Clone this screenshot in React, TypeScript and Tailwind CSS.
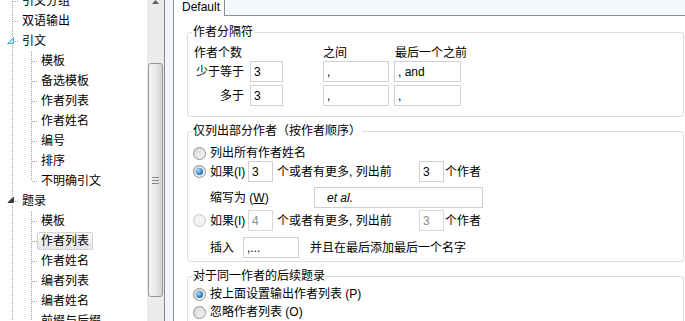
import clsx from "clsx";

type TreeRow = {
  label: string;
  level: 0 | 1;
  open?: "hot" | "dark";
  last?: boolean;
  selected?: boolean;
};

const treeRows: TreeRow[] = [
  { label: "引文分组", level: 0 },
  { label: "双语输出", level: 0 },
  { label: "引文", level: 0, open: "hot" },
  { label: "模板", level: 1 },
  { label: "备选模板", level: 1 },
  { label: "作者列表", level: 1 },
  { label: "作者姓名", level: 1 },
  { label: "编号", level: 1 },
  { label: "排序", level: 1 },
  { label: "不明确引文", level: 1, last: true },
  { label: "题录", level: 0, open: "dark" },
  { label: "模板", level: 1 },
  { label: "作者列表", level: 1, selected: true },
  { label: "作者姓名", level: 1 },
  { label: "编者列表", level: 1 },
  { label: "编者姓名", level: 1 },
  { label: "前缀与后缀", level: 1 },
];

const DOT = "#a5a5a5";

const Connector = ({ row }: { row: TreeRow }) => {
  const line = { stroke: DOT, strokeWidth: 1, strokeDasharray: "1 1" };
  if (row.level === 0) {
    return (
      <svg width="18" height="20" className="shrink-0">
        {row.open ? (
          <>
            <line x1="12.5" y1="0" x2="12.5" y2="5" {...line} />
            <line x1="12.5" y1="14" x2="12.5" y2="20" {...line} />
            <line x1="15" y1="10.5" x2="18" y2="10.5" {...line} />
            {row.open === "hot" ? (
              <polygon points="13.5,6.5 13.5,12.5 7.5,12.5" fill="#bfe8f8" stroke="#3fa9dc" />
            ) : (
              <polygon points="13.5,6 13.5,11.5 8,11.5" fill="#3c3c3c" stroke="#3c3c3c" />
            )}
          </>
        ) : (
          <>
            <line x1="12.5" y1="0" x2="12.5" y2="20" {...line} />
            <line x1="13" y1="10.5" x2="18" y2="10.5" {...line} />
          </>
        )}
      </svg>
    );
  }
  return (
    <svg width="37" height="20" className="shrink-0">
      <line x1="12.5" y1="0" x2="12.5" y2="20" {...line} />
      <line x1="31.5" y1="0" x2="31.5" y2={row.last ? 10 : 20} {...line} />
      <line x1="32" y1="10.5" x2="37" y2="10.5" {...line} />
    </svg>
  );
};

const Radio = ({ checked, disabled }: { checked?: boolean; disabled?: boolean }) => (
  <span
    className={clsx(
      "flex h-[13px] w-[13px] shrink-0 items-center justify-center rounded-full border",
      disabled
        ? "border-[#c4c4c4] bg-[#f2f2f2]"
        : "border-[#8e8f8f] bg-[linear-gradient(135deg,#d4d4d4,#f9f9f9)]"
    )}
  >
    {checked && (
      <span className="h-[7px] w-[7px] rounded-full bg-[radial-gradient(circle_at_35%_35%,#a6e0ff,#2f86cf_55%,#0c3b78)]" />
    )}
  </span>
);

const Field = ({
  value,
  className,
  disabled,
  italic,
}: {
  value: string;
  className: string;
  disabled?: boolean;
  italic?: boolean;
}) => (
  <input
    readOnly
    value={value}
    className={clsx(
      "h-[21px] shrink-0 border bg-white px-[3px] text-[12px] outline-none",
      disabled ? "border-[#d9d9d9] text-[#8d8d8d]" : "border-[#cdd0d5] text-black",
      italic && "pl-[12px] text-[11px] italic",
      className
    )}
  />
);

const Group = ({
  title,
  children,
  className,
  pad,
}: {
  title: string;
  children: React.ReactNode;
  className?: string;
  pad?: string;
}) => (
  <fieldset className={clsx("rounded-[3px] border border-[#d5dfe5]", className)}>
    <legend className="ml-[4px] px-[1px] leading-[16px]">{title}</legend>
    <div className={pad}>{children}</div>
  </fieldset>
);

export default function App() {
  return (
    <div className="flex h-[321px] w-[685px] overflow-hidden bg-white text-[12px] text-black font-['Liberation_Sans','Noto_Sans_CJK_SC',sans-serif]">
      {/* tree pane */}
      <div className="flex w-[165px] shrink-0 border-r border-[#828790]">
        <div className="w-[147px] shrink-0 overflow-hidden">
          <div className="-mt-[9px]">
            {treeRows.map((row, i) => (
              <div key={i} className="flex h-[20px] items-center">
                <Connector row={row} />
                <span
                  className={clsx(
                    "h-[18px] whitespace-nowrap rounded-[2px] border px-[3px] leading-[16px]",
                    row.selected
                      ? "border-[#d2d2d2] bg-linear-to-b from-[#fafafa] to-[#e6e6e6]"
                      : "border-transparent"
                  )}
                >
                  {row.label}
                </span>
              </div>
            ))}
          </div>
        </div>
        <div className="flex w-[17px] shrink-0 flex-col items-center bg-[#ebebeb]">
          <svg width="7" height="4">
            <polygon points="0,4 7,4 3.5,0" fill="#5f5f5f" />
          </svg>
          <div className="mt-[59px] flex h-[234px] w-[15px] flex-col items-center justify-center gap-[2px] rounded-[3px] border border-[#969696] bg-linear-to-r from-[#f4f4f4] via-[#e9e9e9] to-[#d2d2d2]">
            <span className="h-px w-[7px] bg-[#8a8a8a]" />
            <span className="h-px w-[7px] bg-[#8a8a8a]" />
            <span className="h-px w-[7px] bg-[#8a8a8a]" />
          </div>
        </div>
      </div>

      {/* splitter */}
      <div className="w-[8px] shrink-0 bg-[#f1f5fb]" />

      {/* settings pane */}
      <div className="flex min-w-0 flex-1 flex-col border-l border-[#898c95]">
        <div className="flex h-[16px] shrink-0">
          <div className="w-[51px] border-r border-[#898c95] bg-white pl-[8px] leading-[14px]">Default</div>
          <div className="flex-1 border-b border-[#8e8f8f] bg-[#f4f8fd]" />
        </div>

        <div className="flex flex-col pt-[8px] pl-[13px] pr-[1px]">
          <Group title="作者分隔符" className="pb-[10px]" pad="pl-[6px]">
            <div className="mt-[5px] flex h-[16px] items-center">
              <span className="w-[129px]">作者个数</span>
              <span className="w-[72px]">之间</span>
              <span>最后一个之前</span>
            </div>
            <div className="flex items-center">
              <span className="w-[50px] text-right">少于等于</span>
              <Field value="3" className="ml-[6px] w-[33px]" />
              <Field value="," className="ml-[40px] w-[66px]" />
              <Field value=", and" className="ml-[5px] w-[67px]" />
            </div>
            <div className="mt-[3px] flex items-center">
              <span className="w-[50px] text-right">多于</span>
              <Field value="3" className="ml-[6px] w-[33px]" />
              <Field value="," className="ml-[40px] w-[66px]" />
              <Field value="," className="ml-[5px] w-[67px]" />
            </div>
          </Group>

          <Group title="仅列出部分作者（按作者顺序）" className="mt-[6px] pb-[3px]" pad="pl-[5px]">
            <div className="mt-[6px] flex h-[16px] items-center">
              <Radio />
              <span className="ml-[4px]">列出所有作者姓名</span>
            </div>
            <div className="flex h-[21px] items-center">
              <Radio checked />
              <span className="ml-[4px] w-[38px]">如果(I)</span>
              <Field value="3" className="w-[25px]" />
              <span className="ml-[4px] w-[142px]">个或者有更多, 列出前</span>
              <Field value="3" className="w-[25px]" />
              <span className="ml-[1px]">个作者</span>
            </div>
            <div className="mt-[5px] flex h-[21px] items-center">
              <span className="ml-[17px] w-[104px]">
                缩写为 (<span className="underline">W</span>)
              </span>
              <Field value="et al." className="w-[169px]" italic />
            </div>
            <div className="mt-[2px] flex h-[21px] items-center">
              <Radio disabled />
              <span className="ml-[4px] w-[38px]">如果(I)</span>
              <Field value="4" className="w-[25px]" disabled />
              <span className="ml-[4px] w-[142px]">个或者有更多, 列出前</span>
              <Field value="3" className="w-[25px]" disabled />
              <span className="ml-[1px]">个作者</span>
            </div>
            <div className="mt-[6px] flex h-[21px] items-center">
              <span className="ml-[17px] w-[33px]">插入</span>
              <Field value=",..." className="w-[56px]" />
              <span className="ml-[11px]">并且在最后添加最后一个名字</span>
            </div>
          </Group>

          <Group title="对于同一作者的后续题录" className="mt-[6px] pb-[10px]" pad="pl-[5px]">
            <div className="mt-[1px] flex h-[18px] items-center">
              <Radio checked />
              <span className="ml-[4px]">按上面设置输出作者列表 (P)</span>
            </div>
            <div className="flex h-[18px] items-center">
              <Radio />
              <span className="ml-[4px]">忽略作者列表 (O)</span>
            </div>
          </Group>
        </div>
      </div>
    </div>
  );
}
